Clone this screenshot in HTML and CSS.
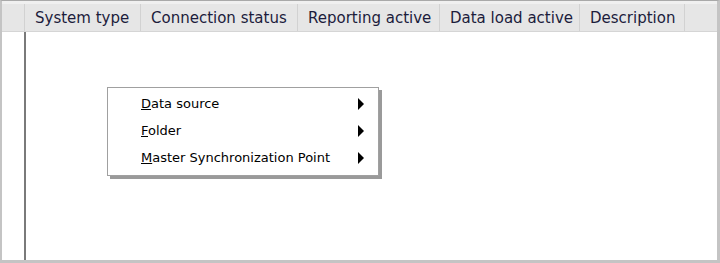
FILE: index.html
```html
<!DOCTYPE html>
<html lang="en">

<head>
  <title>Systems</title>
  <meta charset="UTF-8">
  <meta name="viewport" content="width=device-width, initial-scale=1">
  <link rel="stylesheet" href="styles.css">
</head>

<body>

  <div class="frame">
    <div class="header">
      <div class="col col-gutter"></div>
      <div class="col col-type">System type</div>
      <div class="col col-conn">Connection status</div>
      <div class="col col-rep">Reporting active</div>
      <div class="col col-load">Data load active</div>
      <div class="col col-desc">Description</div>
      <div class="col col-fill"></div>
    </div>

    <div class="grid-body">
      <div class="gutter"></div>
      <div class="rows"></div>
    </div>

    <!-- context menu -->
    <ul class="menu">
      <li><span><u>D</u>ata source</span><i class="arrow"></i></li>
      <li><span><u>F</u>older</span><i class="arrow"></i></li>
      <li><span><u>M</u>aster Synchronization Point</span><i class="arrow"></i></li>
    </ul>
  </div>

</body>

</html>
```

FILE: styles.css
```css
body {
  margin: 0;
  font-family: "DejaVu Sans", sans-serif;
  background: #ffffff;
}

.frame {
  position: relative;
  width: 720px;
  height: 263px;
  box-sizing: border-box;
  border-top: 1px solid #a9a9a9;
  border-left: 2px solid #c4c4c4;
  border-right: 3px solid #c4c4c4;
  border-bottom: 3px solid #c4c4c4;
  display: flex;
  flex-direction: column;
  background: #ffffff;
}

.header {
  display: flex;
  height: 31px;
  box-sizing: border-box;
  padding-top: 3px;
  background: #f0f0f0;
  border-bottom: 1px solid #d5d5d5;
}

.col {
  box-sizing: border-box;
  background: #e6e6e6;
  border-right: 1px solid #d2d2d2;
  font-size: 15px;
  color: #1c1c3c;
  padding-left: 10px;
  line-height: 29px;
  white-space: nowrap;
  overflow: hidden;
}

.col-gutter { width: 23px; padding: 0; }
.col-type { width: 116px; }
.col-conn { width: 157px; }
.col-rep { width: 142px; }
.col-load { width: 140px; }
.col-desc { width: 105px; }
.col-fill { flex: 1; border-right: none; }

.grid-body {
  flex: 1;
  display: flex;
}

.gutter {
  width: 22px;
  border-right: 2px solid #7a7a7a;
}

.rows {
  flex: 1;
}

.menu {
  position: absolute;
  left: 105px;
  top: 86px;
  width: 270px;
  margin: 0;
  padding: 2px 0 4px;
  list-style: none;
  background: #ffffff;
  border: 1px solid #a0a0a0;
  box-shadow: 3px 3px 0 #9a9a9a;
  font-family: "DejaVu Sans", sans-serif;
  font-size: 13px;
  color: #000000;
}

.menu li {
  display: flex;
  justify-content: space-between;
  align-items: center;
  height: 27px;
  padding-left: 33px;
  padding-right: 14px;
}

.arrow {
  width: 0;
  height: 0;
  border-top: 6px solid transparent;
  border-bottom: 6px solid transparent;
  border-left: 6px solid #000000;
}
```
